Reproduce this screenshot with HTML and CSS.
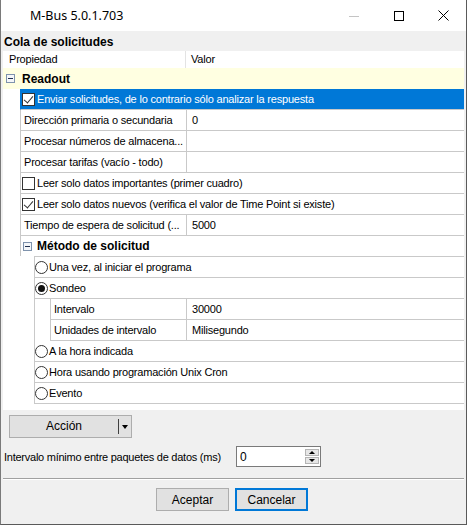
FILE: index.html
```html
<!DOCTYPE html>
<html lang="es">
<head>
  <meta charset="UTF-8" />
  <title>M-Bus 5.0.1.703</title>
  <link rel="stylesheet" href="styles.css">
</head>
<body>
  <div class="window">
    <div class="titlebar">
      <span class="title">M-Bus 5.0.1.703</span>
      <div class="controls">
        <span class="ctl ctl-min"><svg width="10" height="10" viewBox="0 0 10 10"><path d="M0 5.5h10" stroke="#c4c4c4" stroke-width="1"/></svg></span>
        <span class="ctl"><svg width="10" height="10" viewBox="0 0 10 10"><rect x="0.5" y="0.5" width="9" height="9" fill="none" stroke="#000" stroke-width="1"/></svg></span>
        <span class="ctl"><svg width="11" height="11" viewBox="0 0 11 11"><path d="M0.5 0.5l10 10M10.5 0.5l-10 10" stroke="#000" stroke-width="1"/></svg></span>
      </div>
    </div>

    <div class="content">
      <div class="section-title">Cola de solicitudes</div>

      <div class="grid">
        <div class="grid-head">
          <div class="head-name">Propiedad</div>
          <div class="head-value">Valor</div>
        </div>

        <div class="category"><span class="toggle"></span>Readout</div>

        <div class="level1">
          <div class="row selected"><span class="check checked"></span><span class="label">Enviar solicitudes, de lo contrario sólo analizar la respuesta</span></div>
          <div class="row"><div class="name">Dirección primaria o secundaria</div><div class="value">0</div></div>
          <div class="row"><div class="name">Procesar números de almacena...</div><div class="value"></div></div>
          <div class="row"><div class="name">Procesar tarifas (vacío - todo)</div><div class="value"></div></div>
          <div class="row"><span class="check"></span><span class="label">Leer solo datos importantes (primer cuadro)</span></div>
          <div class="row"><span class="check checked"></span><span class="label">Leer solo datos nuevos (verifica el valor de Time Point si existe)</span></div>
          <div class="row"><div class="name">Tiempo de espera de solicitud (...</div><div class="value">5000</div></div>
          <div class="subcat"><span class="toggle"></span>Método de solicitud</div>

          <div class="level2">
            <div class="row"><span class="radio"></span><span class="label">Una vez, al iniciar el programa</span></div>
            <div class="row"><span class="radio on"></span><span class="label">Sondeo</span></div>
            <div class="level3">
              <div class="row"><div class="name">Intervalo</div><div class="value">30000</div></div>
              <div class="row"><div class="name">Unidades de intervalo</div><div class="value">Milisegundo</div></div>
            </div>
            <div class="row"><span class="radio"></span><span class="label">A la hora indicada</span></div>
            <div class="row"><span class="radio"></span><span class="label">Hora usando programación Unix Cron</span></div>
            <div class="row"><span class="radio"></span><span class="label">Evento</span></div>
          </div>
        </div>
      </div>

      <div class="split-btn">
        <span class="split-main">Acción</span>
        <span class="split-arrow"></span>
      </div>

      <div class="field">
        <span class="field-label">Intervalo mínimo entre paquetes de datos (ms)</span>
        <div class="spin">
          <span class="spin-text">0</span>
          <div class="spin-btns">
            <span class="spin-btn up"></span>
            <span class="spin-btn down"></span>
          </div>
        </div>
      </div>

      <div class="separator"></div>

      <div class="actions">
        <button class="btn">Aceptar</button>
        <button class="btn default">Cancelar</button>
      </div>
    </div>
  </div>
</body>
</html>
```

FILE: styles.css
```css
* {
  margin: 0;
  padding: 0;
  box-sizing: border-box;
}

body {
  background: #2b3a4a;
  font-family: 'Liberation Sans', Arial, sans-serif;
  font-size: 11px;
  color: #000;
}

.window {
  width: 467px;
  height: 525px;
  background: #f0f0f0;
  border-left: 1px solid #7a7a7a;
  border-right: 1px solid #5a5a5a;
  border-bottom: 1px solid #5a5a5a;
  display: flex;
  flex-direction: column;
}

/* title bar */
.titlebar {
  height: 31px;
  background: #fff;
  display: flex;
  align-items: center;
  padding-left: 29px;
}

.title {
  font-family: 'Noto Sans', sans-serif;
  font-size: 12.5px;
  flex: 1;
}

.controls {
  display: flex;
  height: 100%;
}

.ctl {
  width: 45px;
  display: flex;
  align-items: center;
  justify-content: center;
}

.ctl svg { display: block; }

/* main area */
.content {
  flex: 1;
  padding: 0 2px;
  display: flex;
  flex-direction: column;
}

.section-title {
  font-weight: bold;
  font-size: 12px;
  height: 20px;
  line-height: 22px;
  padding-left: 1px;
}

.grid {
  background: #fff;
  padding-bottom: 6px;
  letter-spacing: -0.2px;
}

.grid-head {
  display: flex;
  height: 17px;
  line-height: 17px;
}

.head-name {
  width: 183px;
  padding-left: 6px;
  border-right: 1px solid #e3e3e3;
}

.head-value {
  flex: 1;
  padding-left: 5px;
}

.category {
  height: 21px;
  background: #ffffe1;
  display: flex;
  align-items: center;
  font-weight: bold;
  font-size: 12px;
  letter-spacing: 0;
}

.category .toggle { margin: 0 7px 0 3px; }

.toggle {
  width: 9px;
  height: 9px;
  border: 1px solid #7f93ad;
  background: #f4f6f9;
  position: relative;
  flex: none;
}

.toggle::after {
  content: "";
  position: absolute;
  left: 1px;
  right: 1px;
  top: 3px;
  height: 1px;
  background: #1f2f4f;
}

.level1 { margin-left: 17px; }

.row {
  height: 21px;
  display: flex;
  align-items: center;
  border-bottom: 1px solid #c9c9c9;
  border-left: 1px solid #c9c9c9;
  white-space: nowrap;
}

.row .label { padding-left: 2px; }

.name {
  flex: 1;
  height: 100%;
  line-height: 20px;
  padding-left: 3px;
  overflow: hidden;
}

.value {
  width: 278px;
  height: 100%;
  line-height: 20px;
  padding-left: 5px;
  border-left: 1px solid #c9c9c9;
}

.row.selected {
  background: #0078d7;
  border-left-color: #0078d7;
  color: #fff;
}

.check {
  width: 13px;
  height: 13px;
  border: 1px solid #333;
  background: #fff;
  margin-left: 1px;
  flex: none;
  position: relative;
}

.check.checked::after {
  content: "";
  position: absolute;
  left: 3px;
  top: 0px;
  width: 4px;
  height: 8px;
  border-right: 1px solid #333;
  border-bottom: 1px solid #333;
  transform: rotate(40deg);
}

.subcat {
  height: 20px;
  display: flex;
  align-items: center;
  border-left: 1px solid #c9c9c9;
  font-weight: bold;
  font-size: 12px;
  letter-spacing: 0;
}

.subcat .toggle { margin: 0 5px 0 2px; }

.level2 {
  margin-left: 14px;
  border-left: 1px solid #c9c9c9;
  border-top: 1px solid #c9c9c9;
}

.level2 > .row { border-left: none; }

.radio {
  width: 13px;
  height: 13px;
  border: 1px solid #333;
  border-radius: 50%;
  background: #fff;
  flex: none;
  position: relative;
}

.radio.on::after {
  content: "";
  position: absolute;
  left: 2px;
  top: 2px;
  width: 7px;
  height: 7px;
  border-radius: 50%;
  background: #111;
}

.row .radio + .label { padding-left: 1px; }

.level3 { margin-left: 15px; }

/* bottom controls */
.split-btn {
  margin: 5px 0 0 6px;
  width: 123px;
  height: 23px;
  background: #e1e1e1;
  border: 1px solid #adadad;
  display: flex;
  align-items: center;
  font-size: 12px;
}

.split-main {
  width: 109px;
  text-align: center;
  border-right: 1px solid #404040;
  height: 15px;
  line-height: 15px;
}

.split-arrow {
  width: 0;
  height: 0;
  margin-left: 3px;
  border-left: 3px solid transparent;
  border-right: 3px solid transparent;
  border-top: 4px solid #000;
}

.field {
  margin-top: 8px;
  display: flex;
  align-items: center;
  height: 21px;
}

.field-label {
  width: 233px;
  flex: none;
  padding-left: 1px;
  font-size: 11px;
  letter-spacing: -0.25px;
  white-space: nowrap;
}

.spin {
  width: 85px;
  height: 21px;
  flex: none;
  background: #fff;
  border: 1px solid #7a7a7a;
  display: flex;
  align-items: center;
}

.spin-text {
  flex: 1;
  padding-left: 3px;
  font-size: 12px;
}

.spin-btns {
  display: flex;
  flex-direction: column;
  gap: 1px;
  margin-right: 1px;
}

.spin-btn {
  width: 14px;
  height: 7px;
  background: #e6e6e6;
  border: 1px solid #b4b4b4;
  display: flex;
  align-items: center;
  justify-content: center;
}

.spin-btn::after {
  content: "";
  border-left: 3px solid transparent;
  border-right: 3px solid transparent;
}

.spin-btn.up::after { border-bottom: 3px solid #000; }
.spin-btn.down::after { border-top: 3px solid #000; }

.separator {
  margin-top: 11px;
  height: 2px;
  border-top: 1px solid #a0a0a0;
  border-bottom: 1px solid #fff;
}

.actions {
  margin-top: 8px;
  display: flex;
  gap: 6px;
  padding-left: 153px;
}

.btn {
  width: 73px;
  height: 23px;
  background: #e1e1e1;
  border: 1px solid #adadad;
  font-family: 'Liberation Sans', Arial, sans-serif;
  font-size: 12px;
  color: #000;
}

.btn.default {
  border: 2px solid #0078d7;
}
```
